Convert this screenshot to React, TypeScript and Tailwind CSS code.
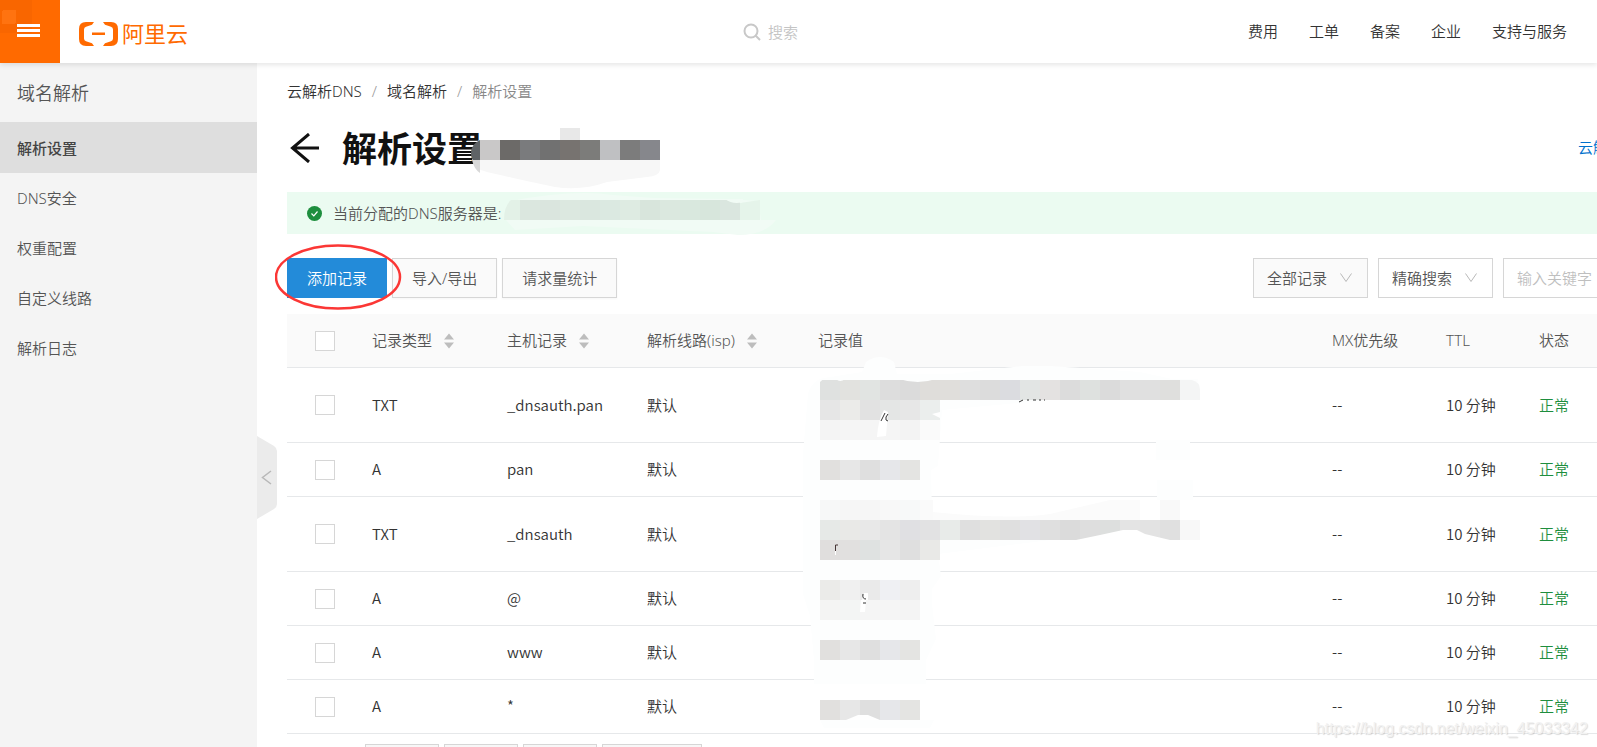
import React, { useState } from 'react';

const navItems = ['费用', '工单', '备案', '企业', '支持与服务'];
const menuItems = ['解析设置', 'DNS安全', '权重配置', '自定义线路', '解析日志'];

const records = [
    { id: 1, type: 'TXT', host: '_dnsauth.pan', tall: true },
    { id: 2, type: 'A', host: 'pan', tall: false },
    { id: 3, type: 'TXT', host: '_dnsauth', tall: true },
    { id: 4, type: 'A', host: '@', tall: false },
    { id: 5, type: 'A', host: 'www', tall: false },
    { id: 6, type: 'A', host: '*', tall: false },
];

const shortRow = ['#e1e0de', '#e7e7e7', '#dfdfdf', '#e6e7ea', '#e4e4e2'];

function Blocks({ x, y, colors }: { x: number; y: number; colors: string[] }) {
    return (
        <g shapeRendering="crispEdges">
            {colors.map((color, i) => (
                <rect key={i} x={x + i * 20} y={y} width="20" height="20" fill={color} />
            ))}
        </g>
    );
}

function Logo() {
    return (
        <a href="#" className="ml-[19px] flex items-center gap-1 pt-1 text-[#ff6a00]">
            <svg width="39" height="24" viewBox="0 0 39 24" fill="currentColor">
                <path d="M15 0 L13 2.800 L7 4.800 Q5 5.500 5 7.500 V16.500 Q5 18.500 7 19.200 L13 21.200 L15 24 H7 Q0 24 0 17 V7 Q0 0 7 0 Z" />
                <path d="M24 0 L26 2.800 L32 4.800 Q34 5.500 34 7.500 V16.500 Q34 18.500 32 19.200 L26 21.200 L24 24 H32 Q39 24 39 17 V7 Q39 0 32 0 Z" />
                <rect x="13" y="10.500" width="13" height="2.500" />
            </svg>
            <span className="pb-0.5 text-[22px] font-normal leading-6">阿里云</span>
        </a>
    );
}

function Header() {
    return (
        <header className="relative z-10 flex h-[63px] shrink-0 items-center bg-white shadow-[0_2px_5px_rgba(0,0,0,0.1)]">
            <button type="button" aria-label="菜单" className="h-full w-[60px] bg-[#ff6a00]">
                <svg width="60" height="63" viewBox="0 0 60 63" shapeRendering="crispEdges">
                    <rect width="32" height="33" fill="#f96600" />
                    <rect x="2" y="10" width="14" height="14" rx="2" fill="#ff7310" />
                    <path d="M17 24h23v3H17zM17 29h23v3H17zM17 34h23v3H17z" fill="#fff" />
                </svg>
            </button>
            <Logo />
            <label className="ml-[555px] flex items-center gap-[7px]">
                <svg width="18" height="18" viewBox="0 0 18 18" fill="none" stroke="#c8c8c8" strokeWidth="2">
                    <circle cx="8" cy="8" r="6.500" />
                    <path d="M12.500 12.500 L17 17" />
                </svg>
                <input
                    type="text"
                    placeholder="搜索"
                    aria-label="搜索"
                    className="w-24 bg-transparent outline-none placeholder:text-[#c4c4c4]"
                />
            </label>
            <nav className="ml-auto flex gap-[31px] pb-0.5 pr-[30px] text-[#333]">
                {navItems.map((item) => (
                    <a key={item} href="#">{item}</a>
                ))}
            </nav>
        </header>
    );
}

function Sidebar() {
    const [active, setActive] = useState('解析设置');

    return (
        <aside className="relative w-[257px] shrink-0 bg-[#f4f4f4] text-[#555]">
            <h2 className="flex h-[59px] items-center pl-[17px] text-[18px]">域名解析</h2>
            <nav>
                {menuItems.map((item) => (
                    <a
                        key={item}
                        href="#"
                        onClick={() => setActive(item)}
                        className={
                            item === active
                                ? 'flex h-[51px] items-center bg-[#dedede] pl-[17px] font-medium text-[#444]'
                                : 'flex h-[50px] items-center pl-[17px]'
                        }
                    >
                        {item}
                    </a>
                ))}
            </nav>
            <button type="button" aria-label="收起" className="absolute left-full top-[373px] z-10">
                <svg width="20" height="83" viewBox="0 0 20 83" fill="none">
                    <path d="M0 0 L17 10 Q20 12 20 15 V68 Q20 71 17 73 L0 83 Z" fill="#ebebeb" />
                    <path d="M14 35 L5.500 41.500 L14 48" stroke="#b8b8b8" strokeWidth="1.500" />
                </svg>
            </button>
        </aside>
    );
}

function PageTitle() {
    return (
        <div className="relative mt-[23px] flex h-12 items-center">
            <button type="button" aria-label="返回" className="ml-[3px] pb-0.5">
                <svg width="29" height="30" viewBox="0 0 29 30" fill="none" stroke="#111" strokeWidth="3">
                    <path d="M29 15 H2 M19 1 L2.500 15 L19 29" />
                </svg>
            </button>
            <h1 className="ml-[23px] text-[35px] font-bold leading-[48px] text-[#111]">解析设置</h1>
            <svg className="absolute left-[180px] top-0" width="200" height="66" viewBox="0 0 200 66">
                <path d="M5 34 H193 V45 Q192 51 180 52 L140 57 Q115 66 88 62 L55 55 L20 47 Q8 45 5 34 Z" fill="#f7f7f7" />
                <path d="M13 35 H5 Q7 44 13 48 Z" fill="#d8d8d8" />
                <path d="M13 15 Q4 19 4 28 Q4 33 6 35 H13 Z" fill="#5f6366" />
                <rect x="93" y="3" width="20" height="12" fill="#e8e8e8" />
                <Blocks
                    x={13}
                    y={15}
                    colors={['#c9c8c8', '#6c6a68', '#7a7b7d', '#717171', '#777370', '#7c7c7a', '#bfc0c2', '#7c7c7c', '#86878c']}
                />
            </svg>
            <a href="#" className="ml-auto w-[195px] pb-1 text-[#0070cc]">云解析</a>
        </div>
    );
}

function Notice() {
    return (
        <div className="relative mt-[19px] flex h-[42px] items-center bg-[#ebfbf1] pl-5 text-[#555]">
            <svg width="15" height="15" viewBox="0 0 15 15" fill="none">
                <circle cx="7.500" cy="7.500" r="7.500" fill="#1e8e3e" />
                <path d="M4.500 7.500 L6.800 9.800 L10.500 5.500" stroke="#fff" strokeWidth="1.200" />
            </svg>
            <span className="ml-[11px]">当前分配的DNS服务器是:</span>
            <svg className="absolute left-[216px] top-0" width="275" height="44" viewBox="0 0 275 44">
                <path d="M8 9 Q70 -3 110 3 L150 6 L225 7 L255 9 L258 28 L273 28 Q262 43 235 43 L210 40 L80 34 L12 38 L3 28 Z" fill="#f1fbf5" />
                <path d="M8 8 H20 V28 H1 Q1 14 8 8 Z" fill="#e3f1e7" />
                <Blocks
                    x={17}
                    y={8}
                    colors={['#dbe7df', '#dae5de', '#dce8e0', '#dae7df', '#dbe9e1', '#deebe2', '#d8e5dc', '#dbe8df', '#d9e8de', '#d7e6dc', '#dae6df']}
                />
                <path d="M237 11 L257 8 V28 H237 Z" fill="#e5f4ea" />
                <path d="M222 7 Q230 13 240 10 V7 Z" fill="#f1fbf5" />
            </svg>
        </div>
    );
}

function FilterSelect({ label, className }: { label: string; className: string }) {
    return (
        <div className="relative">
            <select
                aria-label={label}
                className={`h-10 w-[115px] appearance-none border border-[#d6d6d6] pl-[13px] text-[#555] outline-none ${className}`}
            >
                <option>{label}</option>
            </select>
            <svg
                className="pointer-events-none absolute right-4 top-[15px]"
                width="12"
                height="10"
                viewBox="0 0 12 10"
                fill="none"
                stroke="#b8b8b8"
            >
                <path d="M0.500 0.500 L6 8.500 L11.500 0.500" />
            </svg>
        </div>
    );
}

function Toolbar() {
    const plain = 'h-10 border border-[#d6d6d6] bg-[#fafafa] px-[19px] text-[#555] shadow-[0_1px_2px_rgba(0,0,0,0.04)]';

    return (
        <div className="relative mt-6 flex gap-[5px]">
            <button type="button" className="h-10 border border-[#238bd9] bg-[#238bd9] px-[19px] text-white">添加记录</button>
            <button type="button" className={plain}>导入/导出</button>
            <button type="button" className={plain}>请求量统计</button>
            <div className="ml-auto flex gap-[10px]">
                <FilterSelect label="全部记录" className="bg-[#fafafa]" />
                <FilterSelect label="精确搜索" className="bg-white" />
                <input
                    type="text"
                    placeholder="输入关键字"
                    aria-label="关键字"
                    className="h-10 w-[270px] border border-[#d6d6d6] bg-white pl-[13px] outline-none placeholder:text-[#bfbfbf]"
                />
            </div>
            <svg className="pointer-events-none absolute -left-3 -top-[14px] z-10" width="128" height="66" viewBox="0 0 128 66" fill="none">
                <ellipse cx="63" cy="33" rx="62" ry="31.500" stroke="#fb3735" strokeWidth="2.500" />
            </svg>
        </div>
    );
}

function SortIcon() {
    return (
        <svg className="mb-0.5 ml-3 inline-block" width="10" height="16" viewBox="0 0 10 16" fill="#bdbdbd">
            <path d="M5 0.500 L10 6.500 H0 Z M5 15.500 L10 9.500 H0 Z" />
        </svg>
    );
}

// hidden record values
function ValueMask() {
    return (
        <svg className="pointer-events-none absolute left-[513px] top-10" width="410" height="380" viewBox="0 0 410 380">
            <path d="M8 40 Q12 26 24 24 L62 18 L66 8 Q80 -2 94 8 L97 20 L150 20 L222 12 H250 L340 18 L372 25 H398 L400 46 L250 46 L142 56 L138 112 L131 116 L132 160 Q190 172 250 160 L310 147 H380 V170 L138 200 L141 222 L132 235 V250 L136 285 L126 306 V330 H14 V306 L10 262 L3 240 L3 100 Z" fill="#fdfefe" />
            <path d="M356 86 H390 V106 H356 Z M357 126 H393 V146 H357 Z" fill="#fdfefe" />
            <path d="M20 366 H134 L130 374 H24 Z" fill="#fdfefe" />
            <Blocks
                x={20}
                y={26}
                colors={[
                    '#dfe1e0', '#e2e2df', '#e1e4e2', '#dddddd', '#dbdbdb', '#dfddda', '#e0dedb', '#dedede', '#dcdcdc',
                    '#dbdce0', '#e2e5e4', '#e4e2e1', '#dcdcdc', '#dee1df', '#dbdbdb', '#e0e0e0', '#e0e0e0', '#dfdfdd',
                ]}
            />
            <path d="M380 26 H392 Q400 28 400 36 V46 H380 Z" fill="#f4f5f5" />
            <path d="M20 25 H24 Q22 26 20 28 Z M36 25 Q40 29 45 25 Z M99 25 Q118 31 136 25 Z" fill="#fdfefe" />
            <Blocks x={20} y={46} colors={['#e6e6e6', '#ebebe9', '#e2e2e2', '#e4e6e5', '#e7e7e7', '#ebeeed']} />
            <Blocks x={20} y={66} colors={['#f4f4f4', '#f5f5f5', '#f5f5f5', '#f5f5f5', '#f3f3f3', '#fafafa']} />
            <path d="M84 56 L88 58 L86 82 L77 83 Q78 66 84 56 Z" fill="#fff" />
            <path d="M132 60 L140 58 V64 Z" fill="#fff" />
            <path d="M81 67 L85 59 M88 60 Q85 63 86 66 L88 67 M219 48 L223 46 M227 46 H229 M233 46 H236 M239 46 H241 M244 46 H245" stroke="#333" fill="none" />
            <Blocks x={20} y={106} colors={shortRow} />
            <Blocks x={20} y={146} colors={['#f7f8f8', '#f6f6f6', '#f6f6f6', '#f8f8f8', '#f7f9f9']} />
            <rect x="120" y="146" width="13" height="20" fill="#fafafa" />
            <path d="M133 158 Q210 166 250 160 L310 146 H380 V166 H133 Z" fill="#fbfbfb" />
            <rect x="340" y="146" width="20" height="20" fill="#fff" />
            <rect x="360" y="146" width="20" height="20" fill="#f9f9f9" />
            <Blocks
                x={20}
                y={166}
                colors={[
                    '#e6e9e7', '#e9e9e7', '#e8e8e8', '#e4e4e4', '#e0e0e3', '#e2e2e3', '#e8ebe9', '#dfdfdf', '#e2e2e0',
                    '#dfdfdf', '#e1e1e4', '#dfdfdf', '#dbdbdb', '#dedede', '#dddfde', '#e4e4e4', '#e3e3e3', '#e0e0e0', '#f8f8f8',
                ]}
            />
            <path d="M276 186 L300 181 L323 176 H337 L345 180 L370 186 Z" fill="#fff" />
            <Blocks x={20} y={186} colors={['#e0dedd', '#e1e0df', '#dfe2e1', '#e6e6e6', '#dfdfdf', '#e9e9e7']} />
            <path d="M35.500 197 V191 H38" stroke="#433" fill="none" />
            <path d="M35.500 197 V201" stroke="#fff" />
            <Blocks x={20} y={226} colors={['#ebebe9', '#f0f0f0', '#eaeaea', '#eff0f3', '#eeeeee']} />
            <Blocks x={20} y={246} colors={['#f4f4f3', '#f3f5f4', '#f5f5f5', '#f5f5f5', '#f4f4f4']} />
            <path d="M61 246 H66 L65 258 H60 Z M64 239 H68 V246 H62 Z" fill="#fff" />
            <path d="M63 240 Q62 245 66 245 M63 249 H66" stroke="#333" fill="none" />
            <Blocks x={20} y={286} colors={shortRow} />
            <Blocks x={20} y={346} colors={shortRow} />
            <path d="M46 366 L58 361 H68 L80 366 Z" fill="#fff" />
        </svg>
    );
}

const boxClass = 'block h-5 w-5 appearance-none border border-[#d6d6d6] bg-white checked:bg-[#238bd9]';

function RecordTable() {
    const [selected, setSelected] = useState<number[]>([]);

    const toggle = (id: number) => {
        setSelected(selected.includes(id) ? selected.filter((s) => s !== id) : [...selected, id]);
    };

    const toggleAll = () => {
        setSelected(selected.length === records.length ? [] : records.map((r) => r.id));
    };

    return (
        <div className="relative mt-4">
            <table className="w-full table-fixed border-collapse text-left">
                <thead>
                    <tr className="h-[53px] border-b border-[#e6e8ea] bg-[#fafafa] text-[#555]">
                        <th className="w-[69px] pl-7 pt-px">
                            <input
                                type="checkbox"
                                aria-label="全选"
                                checked={selected.length === records.length}
                                onChange={toggleAll}
                                className={boxClass}
                            />
                        </th>
                        <th className="w-[135px] pl-4 font-[350]">记录类型<SortIcon /></th>
                        <th className="w-[140px] pl-4 font-[350]">主机记录<SortIcon /></th>
                        <th className="w-[171px] pl-4 font-[350]">解析线路(isp)<SortIcon /></th>
                        <th className="pl-4 font-[350]">记录值</th>
                        <th className="w-[114px] pl-4 font-[350]">MX优先级</th>
                        <th className="w-[93px] pl-4 font-[350]">TTL</th>
                        <th className="w-[250px] pl-4 font-[350]">状态</th>
                    </tr>
                </thead>
                <tbody className="font-['Noto_Sans_CJK_SC',sans-serif] text-[#333]">
                    {records.map((record) => (
                        <tr key={record.id} className={`border-b border-[#e6e8ea] ${record.tall ? 'h-[75px]' : 'h-[54px]'}`}>
                            <td className="pl-7 pt-px">
                                <input
                                    type="checkbox"
                                    aria-label={record.host}
                                    checked={selected.includes(record.id)}
                                    onChange={() => toggle(record.id)}
                                    className={boxClass}
                                />
                            </td>
                            <td className="pl-4">{record.type}</td>
                            <td className="pl-4">{record.host}</td>
                            <td className="pl-4">默认</td>
                            <td></td>
                            <td className="pl-4">--</td>
                            <td className="pl-4">10 分钟</td>
                            <td className="pl-4 text-[#1e8e3e]">正常</td>
                        </tr>
                    ))}
                </tbody>
            </table>
            <ValueMask />
        </div>
    );
}

function App() {
    const footerButton = 'h-8 border border-[#d6d6d6] bg-[#f7f7f7]';

    return (
        <div className="relative flex h-screen flex-col overflow-hidden bg-white font-['Noto_Sans','Noto_Sans_CJK_SC',sans-serif] text-[15px] font-[350] leading-[22px]">
            <Header />
            <div className="flex min-h-0 flex-1">
                <Sidebar />
                <main className="min-w-0 flex-1 overflow-hidden pl-[30px] pt-[17px]">
                    <div className="-mr-44">
                        <nav className="flex gap-[10px] text-[#333]">
                            <a href="#">云解析DNS</a>
                            <span className="text-[#999]">/</span>
                            <a href="#">域名解析</a>
                            <span className="text-[#999]">/</span>
                            <span className="text-[#888]">解析设置</span>
                        </nav>
                        <PageTitle />
                        <Notice />
                        <Toolbar />
                        <RecordTable />
                        <div className="mt-[10px] flex gap-[5px] pl-[78px]">
                            <button type="button" className={`w-[74px] ${footerButton}`}></button>
                            <button type="button" className={`w-[74px] ${footerButton}`}></button>
                            <button type="button" className={`w-[74px] ${footerButton}`}></button>
                            <button type="button" className={`w-[100px] ${footerButton}`}></button>
                        </div>
                    </div>
                </main>
            </div>
            <p className="pointer-events-none absolute bottom-[7px] right-[9px] font-['Liberation_Sans',sans-serif] text-[16px] font-normal text-[#f2f2f2] [text-shadow:1px_1px_1px_rgba(0,0,0,0.15)]">
                https://blog.csdn.net/weixin_45033342
            </p>
        </div>
    );
}

export default App;
